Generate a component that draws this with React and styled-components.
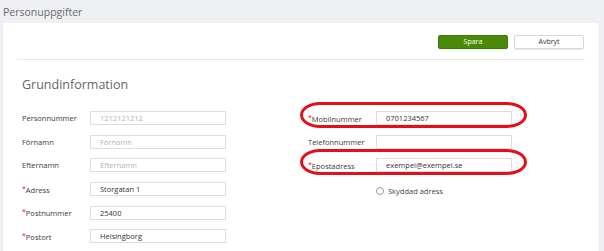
import React from 'react';
import styled, { createGlobalStyle } from 'styled-components';

const Global = createGlobalStyle`
  html, body { margin: 0; padding: 0; }
  body {
    background: #eff0f4;
    font-family: "Open Sans", "Liberation Sans", sans-serif;
    width: 604px;
    height: 251px;
    overflow: hidden;
  }
`;

const Header = styled.div`
  height: 23px;
  padding-left: 3px;
  display: flex;
  align-items: center;
  font-size: 10.5px;
  color: #6a6a6a;
`;

const Panel = styled.div`
  margin-left: 3px;
  width: 595px;
  height: 228px;
  background: #fff;
  padding-top: 12px;
  box-sizing: border-box;
`;

const Toolbar = styled.div`
  display: flex;
  justify-content: flex-end;
  gap: 6px;
  padding-right: 14px;
`;

const Button = styled.button`
  width: 70px;
  height: 14px;
  padding: 0;
  border-radius: 2px;
  font-family: inherit;
  font-size: 7px;
  line-height: 12px;
  border: 1px solid ${p => (p.$primary ? '#3f7a06' : '#d6d6d6')};
  background: ${p => (p.$primary ? '#4b8a08' : '#fff')};
  color: ${p => (p.$primary ? '#fff' : '#333')};
  box-shadow: 0 1px 1px rgba(0, 0, 0, 0.08);
`;

const Separator = styled.div`
  height: 1px;
  background: #e8e8e8;
  margin: 10px 13px 0 14px;
`;

const Heading = styled.div`
  margin: 17px 0 0 19px;
  font-size: 12.5px;
  line-height: 16px;
  color: #666;
`;

const Columns = styled.div`
  display: grid;
  grid-template-columns: 297px 240px;
  margin-top: 18px;
`;

const Column = styled.div`
  display: flex;
  flex-direction: column;
  gap: 9.7px;
  padding-left: ${p => p.$pad}px;
`;

const Row = styled.div`
  position: relative;
  display: flex;
  align-items: center;
  height: 14px;
`;

const Label = styled.div`
  width: ${p => p.$w}px;
  font-size: 7.5px;
  color: #3a3a3a;
  white-space: nowrap;
`;

const Star = styled.span`
  color: #d9232d;
  font-size: 7px;
  vertical-align: 2px;
`;

const Input = styled.div`
  width: 136px;
  height: 14px;
  box-sizing: border-box;
  border: 1px solid #dedede;
  padding-left: 9px;
  display: flex;
  align-items: center;
  font-size: 7.5px;
  color: ${p => (p.$placeholder ? '#b4b4b4' : '#333')};
`;

const Highlight = styled.div`
  position: absolute;
  left: -8px;
  top: -9px;
  width: 227px;
  height: 26px;
  box-sizing: border-box;
  border: 3px solid #e3101b;
  border-radius: 20px / 13px;
  pointer-events: none;
`;

const CheckRow = styled.div`
  display: flex;
  align-items: center;
  gap: 4px;
  margin-left: 68px;
  margin-top: 4px;
  font-size: 7.5px;
  color: #444;
`;

const Circle = styled.span`
  width: 8px;
  height: 8px;
  border: 1px solid #9a9a9a;
  border-radius: 50%;
  box-sizing: border-box;
`;

const left = [
  { label: 'Personnummer', value: '1212121212', placeholder: true },
  { label: 'Förnamn', value: 'Förnamn', placeholder: true },
  { label: 'Efternamn', value: 'Efternamn', placeholder: true },
  { label: 'Adress', value: 'Storgatan 1', required: true },
  { label: 'Postnummer', value: '25400', required: true },
  { label: 'Postort', value: 'Helsingborg', required: true },
];

const right = [
  { label: 'Mobilnummer', value: '0701234567', required: true, mark: true },
  { label: 'Telefonnummer', value: '' },
  { label: 'Epostadress', value: 'exempel@exempel.se', required: true, mark: true },
];

function Field({ f, w }) {
  return (
    <Row>
      <Label $w={w}>
        {f.required && <Star>*</Star>}
        {f.label}
      </Label>
      <Input $placeholder={f.placeholder}>{f.value}</Input>
      {f.mark && <Highlight />}
    </Row>
  );
}

export default function App() {
  return (
    <>
      <Global />
      <Header>Personuppgifter</Header>
      <Panel>
        <Toolbar>
          <Button $primary>Spara</Button>
          <Button>Avbryt</Button>
        </Toolbar>
        <Separator />
        <Heading>Grundinformation</Heading>
        <Columns>
          <Column $pad={19}>
            {left.map(f => <Field key={f.label} f={f} w={68} />)}
          </Column>
          <Column $pad={8}>
            {right.map(f => <Field key={f.label} f={f} w={68} />)}
            <CheckRow>
              <Circle />
              Skyddad adress
            </CheckRow>
          </Column>
        </Columns>
      </Panel>
    </>
  );
}
